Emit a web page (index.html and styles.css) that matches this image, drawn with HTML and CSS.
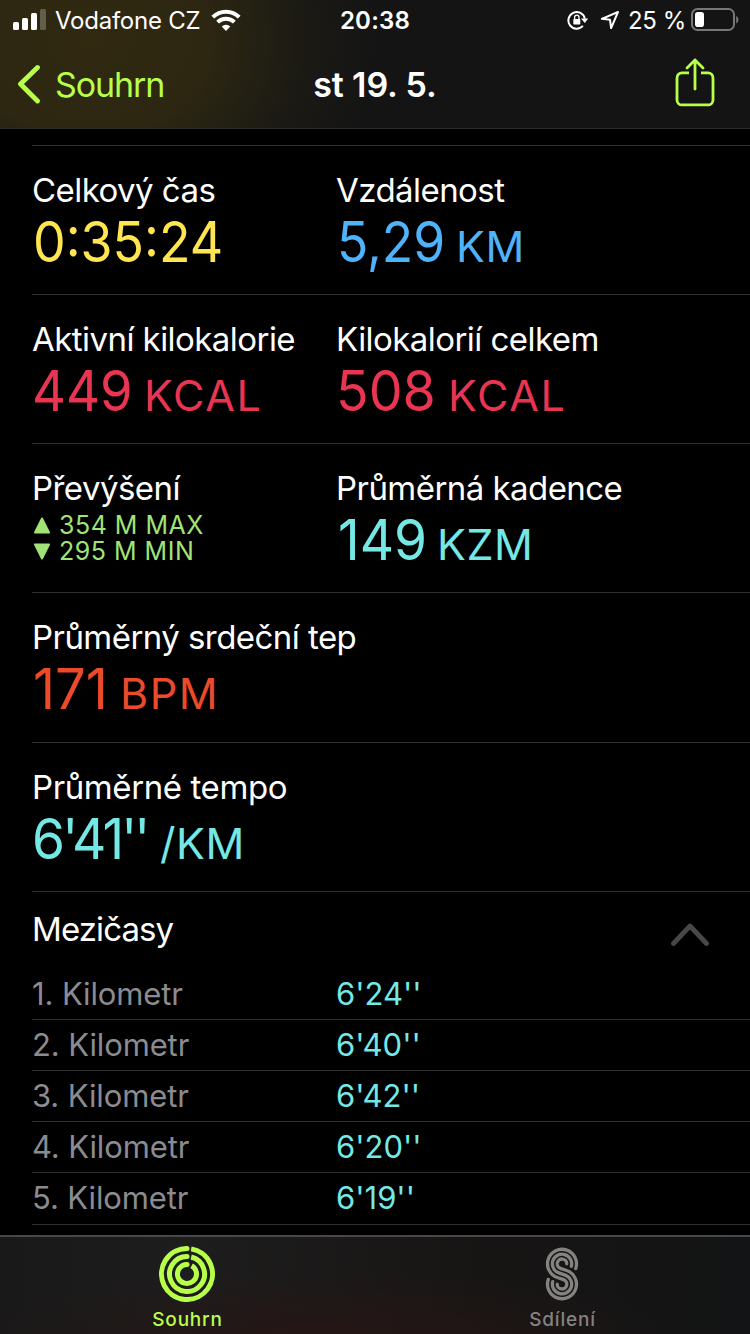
FILE: index.html
```html
<!DOCTYPE html>
<html lang="cs">
<head>
<meta charset="utf-8">
<title>st 19. 5.</title>
<link rel="stylesheet" href="styles.css">
</head>
<body>
<div class="screen">
  <header class="top">
    <div class="status">
      <div class="status-left">
        <svg class="signal" width="34" height="22" viewBox="0 0 34 22"><g fill="#fff"><rect x="0" y="13" width="6" height="8" rx="1.5"/><rect x="9" y="9" width="6" height="12" rx="1.5"/><rect x="18" y="4" width="6" height="17" rx="1.5"/><rect x="27" y="0" width="6" height="21" rx="1.5" opacity=".25"/></g></svg>
        <span class="carrier">Vodafone CZ</span>
        <svg class="wifi" width="30" height="22" viewBox="0 0 30 22"><g fill="none" stroke="#fff" stroke-width="4"><path d="M1.8 8.2a18.6 18.6 0 0 1 26.4 0"/><path d="M6.6 13.1a11.9 11.9 0 0 1 16.8 0"/></g><path d="M15 22l-4.3-4.4a6.1 6.1 0 0 1 8.6 0z" fill="#fff"/></svg>
      </div>
      <span class="clock">20:38</span>
      <div class="status-right">
        <svg width="22" height="20" viewBox="0 0 22 20"><path d="M15.9 15.9A8.3 8.3 0 1 1 17.8 8.6" fill="none" stroke="#fff" stroke-width="2"/><path d="M14 8.5h7.2L17.8 13z" fill="#fff"/><rect x="6.3" y="9" width="7" height="5.6" rx=".8" fill="#fff"/><path d="M7.6 9V7.4a2.2 2.2 0 0 1 4.4 0V9" fill="none" stroke="#fff" stroke-width="1.3"/></svg>
        <svg class="arrow" width="20" height="20" viewBox="0 0 20 20"><path d="M18 2L1.8 8.8l8.2.9 1.1 8.4z" fill="none" stroke="#fff" stroke-width="2" stroke-linejoin="round"/></svg>
        <span class="percent">25 %</span>
        <svg class="battery" width="48" height="24" viewBox="0 0 48 24"><rect x="1" y="1" width="42" height="21" rx="5.5" fill="none" stroke="#777" stroke-width="2"/><rect x="4" y="4" width="9" height="15" rx="2.8" fill="#fff"/><path d="M45.2 8v7.5c3-1.500 3-6 0-7.500z" fill="#777"/></svg>
      </div>
    </div>
    <nav class="nav">
      <div class="back">
        <svg width="24" height="40" viewBox="0 0 24 40"><path d="M20.500 3.500L3.500 20l17 17" fill="none" stroke="#b8ff4a" stroke-width="4.800" stroke-linecap="round" stroke-linejoin="round"/></svg>
        <span class="back-text">Souhrn</span>
      </div>
      <h1 class="title">st 19. 5.</h1>
      <svg class="share" width="40" height="50" viewBox="0 0 40 50"><g fill="none" stroke="#b8ff4a" stroke-width="2.800" stroke-linecap="butt" stroke-linejoin="round"><path d="M14 14.900H7a5 5 0 0 0-5 5v22a5 5 0 0 0 5 5h26a5 5 0 0 0 5-5v-22a5 5 0 0 0-5-5h-7"/><path stroke-linecap="round" d="M20 31V2M12 10l8-8 8 8"/></g></svg>
    </nav>
  </header>
  <main class="content">
    <section class="row">
      <div class="metric"><div class="label">Celkový čas</div><div class="value yellow"><span class="num n-time">0:35:24</span></div></div>
      <div class="metric"><div class="label">Vzdálenost</div><div class="value blue"><span class="num n-dist">5,29</span><span class="unit">KM</span></div></div>
    </section>
    <section class="row">
      <div class="metric"><div class="label">Aktivní kilokalorie</div><div class="value red"><span class="num n-kcal">449</span><span class="unit wide">KCAL</span></div></div>
      <div class="metric"><div class="label">Kilokalorií celkem</div><div class="value red"><span class="num n-kcal n-total">508</span><span class="unit wide">KCAL</span></div></div>
    </section>
    <section class="row">
      <div class="metric"><div class="label">Převýšení</div>
        <div class="elevation">
          <div class="elev-line"><svg width="16" height="17" viewBox="0 0 16 17"><path d="M8 1.500L15 15.500H1z" fill="#a1e377" stroke="#a1e377" stroke-width="2" stroke-linejoin="round"/></svg><span>354 M MAX</span></div>
          <div class="elev-line"><svg width="16" height="17" viewBox="0 0 16 17"><path d="M8 15.500L1 1.500h14z" fill="#a1e377" stroke="#a1e377" stroke-width="2" stroke-linejoin="round"/></svg><span>295 M MIN</span></div>
        </div>
      </div>
      <div class="metric"><div class="label">Průměrná kadence</div><div class="value cyan"><span class="num n-cad">149</span><span class="unit">KZM</span></div></div>
    </section>
    <section class="row">
      <div class="metric"><div class="label">Průměrný srdeční tep</div><div class="value orange"><span class="num n-heart">171</span><span class="unit wide">BPM</span></div></div>
    </section>
    <section class="row">
      <div class="metric"><div class="label l-pace">Průměrné tempo</div><div class="value cyan"><span class="num n-pace">6'41''</span><span class="unit">/KM</span></div></div>
    </section>
    <section class="splits">
      <div class="splits-head"><h2 class="label splits-title">Mezičasy</h2><svg width="38" height="24" viewBox="0 0 38 24"><path d="M2.500 20.500L19 3l16.500 17.500" fill="none" stroke="#48484a" stroke-width="4.800" stroke-linecap="round" stroke-linejoin="round"/></svg></div>
      <div class="split"><span class="km">1. Kilometr</span><span class="pace">6'24''</span></div>
      <div class="split"><span class="km">2. Kilometr</span><span class="pace">6'40''</span></div>
      <div class="split"><span class="km">3. Kilometr</span><span class="pace">6'42''</span></div>
      <div class="split"><span class="km">4. Kilometr</span><span class="pace">6'20''</span></div>
      <div class="split last"><span class="km">5. Kilometr</span><span class="pace">6'19''</span></div>
    </section>
  </main>
  <footer class="tabs">
    <div class="tab active">
      <svg width="56" height="56" viewBox="-28 -28 56 56"><g fill="none" stroke="#b8ff4a" stroke-width="5"><path d="M4.200 -25.150A25.500 25.500 0 1 1 0 -25.500"/><path d="M4.200 -17A17.500 17.500 0 1 1 0 -17.500"/><path d="M4.600 -8.300A9.500 9.500 0 1 1 0 -9.500"/></g><g fill="#b8ff4a"><circle cy="-25.500" r="2.500"/><circle cy="-17.500" r="2.500"/><circle cy="-9.500" r="2.500"/></g></svg>
      <span class="tab-text">Souhrn</span>
    </div>
    <div class="tab">
      <svg width="34" height="56" viewBox="-17 -28 34 56"><g fill="none" stroke="#858280" stroke-width="3.300" stroke-linecap="round"><path d="M13.700 -5.400A14.500 14.500 0 1 0 -4.730 3.520L1.560 5.660A4.800 4.800 0 1 1 -4.800 10.200"/><path d="M9.300 -7.600A9.650 9.650 0 1 0 -3.150 -1.070L3.150 1.070A9.650 9.650 0 1 1 -9.300 7.600"/><path d="M4.800 -10.200A4.800 4.800 0 1 0 -1.560 -5.660L4.730 -3.520A14.500 14.500 0 1 1 -13.700 5.400"/></g></svg>
      <span class="tab-text">Sdílení</span>
    </div>
  </footer>
</div>
</body>
</html>
```

FILE: styles.css
```css
* { box-sizing: border-box; }
body { margin: 0; background: #000; color: #fff; font-family: Inter, "Liberation Sans", sans-serif; }
svg { display: block; flex: none; }
.screen { width: 750px; height: 1334px; display: flex; flex-direction: column; overflow: hidden; }

.top { flex: none; height: 129px; border-bottom: 1px solid #2b2b2b; background: radial-gradient(ellipse 290px 230px at 90px 40px, #312910 0%, #2d2712 40%, rgba(31, 29, 20, .6) 75%, rgba(20, 20, 20, 0) 100%), #141414; }
.status { height: 40px; display: grid; grid-template-columns: 1fr auto 1fr; align-items: center; font-size: 24px; line-height: 38px; }
.status-left { display: flex; align-items: center; padding-left: 13px; }
.signal { margin-bottom: 0; }
.carrier { margin: 2px 0 0 8px; width: 146px; letter-spacing: -.25px; white-space: nowrap; }
.wifi { margin-left: 10px; }
.clock { margin-top: 2px; font-weight: 600; letter-spacing: .2px; }
.status-right { display: flex; align-items: center; justify-content: flex-end; padding-right: 11px; }
.arrow { margin-left: 11px; }
.percent { margin: 2px 5px 0 8px; letter-spacing: -.4px; white-space: nowrap; }
.battery { margin-bottom: 1px; }
.nav { height: 88px; display: grid; grid-template-columns: 1fr auto 1fr; align-items: center; }
.back { display: flex; align-items: center; gap: 14px; padding-left: 17px; color: #b8ff4a; font-size: 34px; }
.back-text { letter-spacing: -1.1px; }
.title { margin: 0; font-size: 34px; font-weight: 600; letter-spacing: -.1px; }
.share { justify-self: end; margin: 0 35px 2px 0; }

.content { flex: 1; min-height: 0; padding: 16px 0 0 32px; }
.row { height: 149.15px; border-top: 1px solid #303032; padding-top: 24px; display: grid; grid-template-columns: 304px 1fr; }
.label { margin: 0; font-size: 33px; font-weight: 400; line-height: 40px; letter-spacing: -.55px; white-space: nowrap; }
.l-pace { letter-spacing: -.4px; }
.value { display: flex; align-items: baseline; font-size: 56px; line-height: 64px; font-weight: 400; white-space: nowrap; }
.num { flex: none; transform: scaleX(.94); transform-origin: 0 50%; }
.n-time { transform: translateX(1px) scaleX(.925); }
.n-dist { width: 120px; transform: translateX(1px) scaleX(.92); }
.n-kcal { width: 112px; }
.n-total { transform: scaleX(.96); }
.n-cad { width: 101px; transform: translateX(2px) scaleX(.95); }
.n-heart { width: 88px; transform: translateX(1px) scaleX(.97); }
.n-pace { width: 128px; letter-spacing: -3px; transform: scaleX(.95); }
.unit { font-size: 43px; font-weight: 420; letter-spacing: .5px; }
.wide { letter-spacing: 1.6px; }
.yellow { color: #ffe650; }
.blue { color: #4fb3fc; }
.red { color: #e93552; }
.cyan { color: #74e8e5; }
.orange { color: #eb4a2b; }
.elevation { padding-top: 4px; color: #a1e377; font-size: 25px; line-height: 26px; letter-spacing: .5px; }
.elev-line { display: flex; align-items: center; gap: 9px; padding-left: 2px; }

.splits { border-top: 1px solid #303032; }
.splits-head { height: 77px; display: flex; justify-content: space-between; padding: 17px 41px 0 0; }
.splits-head svg { margin-top: 14px; }
.splits-title { letter-spacing: -.9px; }
.split { height: 51.15px; display: grid; grid-template-columns: 304px 1fr; border-bottom: 1px solid #303032; font-size: 31px; line-height: 50px; }
.last { height: 52px; }
.km { color: #8b8b90; letter-spacing: -.12px; }
.pace { color: #74e8e5; }

.tabs { flex: none; height: 99px; border-top: 2px solid #48484a; background: radial-gradient(ellipse 360px 65px at 320px 100px, #251615, rgba(31, 22, 20, 0)), linear-gradient(90deg, #191919, #1e1d1d 25%, #171514 65%, #131415); display: grid; grid-template-columns: 1fr 1fr; }
.tab { display: flex; flex-direction: column; align-items: center; padding: 9px 1px 0 0; color: #858280; font-size: 19px; font-weight: 500; line-height: 24px; }
.tab-text { margin: 6px 0 0 1px; letter-spacing: .8px; }
.active { color: #b8ff4a; }
```
